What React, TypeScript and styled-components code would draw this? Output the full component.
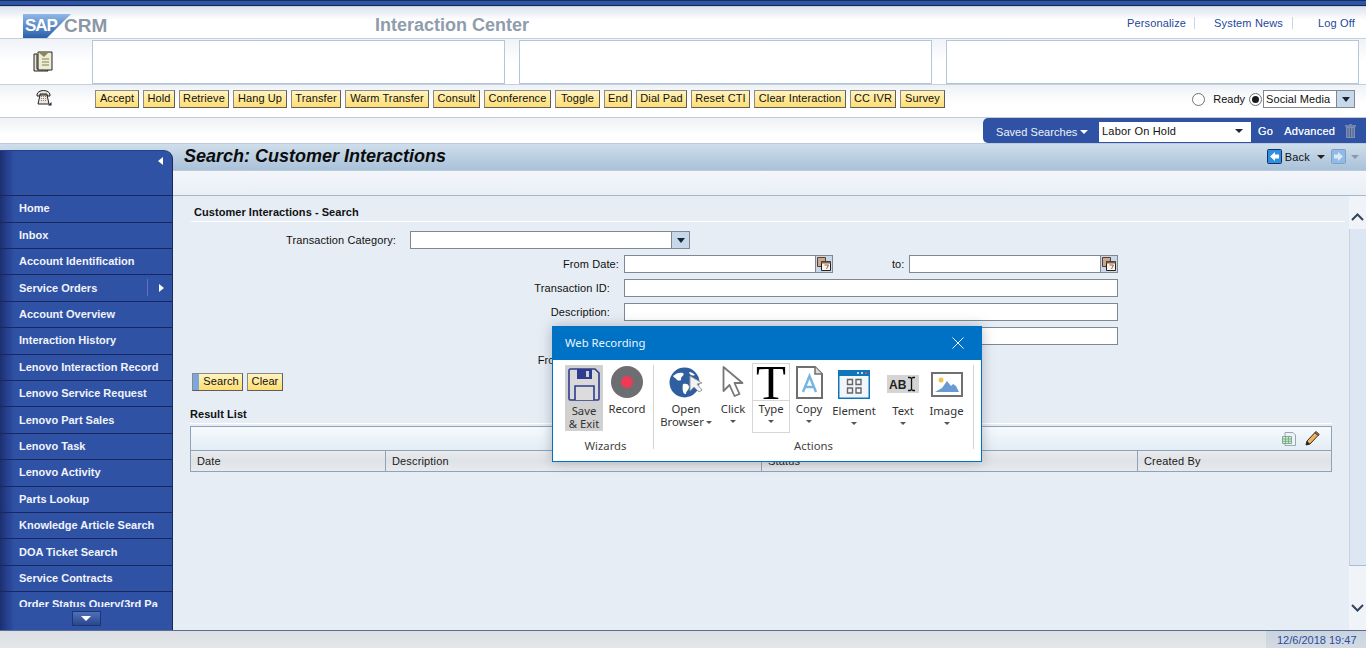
import React from "react";
import styled, { createGlobalStyle } from "styled-components";

const Global = createGlobalStyle`
  html, body { margin: 0; padding: 0; background: #fff; overflow: hidden; }
  body { font-family: "Liberation Sans", Arial, sans-serif; font-size: 11px; color: #111; }
  * { box-sizing: border-box; }
`;

const Page = styled.div`
  position: relative; width: 1366px; height: 648px; display: flex; flex-direction: column; overflow: hidden; background: #fff;
`;
const TopStripe = styled.div`
  height: 7px; flex: none;
  background: linear-gradient(#1a2c5c 0, #1a2c5c 1px, #2c55a8 1px, #2c55a8 5px, #14264e 5px, #14264e 6px, #c6d0e0 6px);
`;
const Masthead = styled.header`
  height: 32px; flex: none; display: flex; align-items: center; position: relative;
  padding-left: 23px; background: linear-gradient(#dde3ee 0, #fff 13px); border-bottom: 1px solid #c4d0dc;
`;
const LogoBox = styled.div`
  width: 84px; height: 24px; display: flex; align-items: center; position: relative; flex: none; margin-top: 7px;
  svg { position: absolute; left: 0; top: 0; }
`;
const LogoSap = styled.span`
  position: relative; font: bold 17px/24px "Liberation Sans", sans-serif; color: #fff; letter-spacing: -1px; margin-left: 2px; top: 0;
`;
const LogoCrm = styled.span`
  position: absolute; left: 41px; top: 2px; font: bold 19px/20px "Liberation Sans", sans-serif; color: #8b97a5; letter-spacing: 0;
`;
const AppTitle = styled.div`
  margin: 5px 0 0 268px; font-weight: bold; font-size: 18px; color: #8f9cab; white-space: nowrap;
`;
const HeaderLinks = styled.nav`
  margin-left: auto; display: flex; align-items: center; height: 12px; margin-top: 1px;
`;
const HeaderLink = styled.a<{ $w: number; $line?: boolean }>`
  width: ${p => p.$w}px; color: #24479c; font-size: 11px; letter-spacing: .15px; white-space: nowrap; text-align: right;
  padding-right: ${p => (p.$line ? 9 : 11)}px; height: 12px; line-height: 12px;
  border-right: ${p => (p.$line ? "1px solid #ced6df" : "0")};
`;
const NotesRow = styled.div`
  height: 46px; flex: none; display: flex; align-items: flex-start; padding: 1px 7px 0 0;
  background: linear-gradient(#eff2f7, #fff 50%); border-bottom: 1px solid #c4cfda;
`;
const NotesIcon = styled.div`
  width: 92px; display: flex; justify-content: center; padding: 11px 6px 0 0; flex: none;
`;
const NoteBoxes = styled.div`
  flex: 1; display: flex; gap: 14px;
`;
const NoteBox = styled.div`
  flex: 1; height: 44px; background: #fff; border: 1px solid #b2c7da;
`;
const CtiRow = styled.div`
  height: 33px; flex: none; display: flex; align-items: flex-start; padding-top: 5px;
  background: linear-gradient(#eef2f7, #fff 60%); border-bottom: 1px solid #c4cbd4;
`;
const PhoneIcon = styled.div`
  width: 95px; flex: none; display: flex; justify-content: center; padding: 0 8px 0 0; margin-top: -1px;
`;
const ButtonRow = styled.div`
  display: flex; gap: 4px;
`;
const CtiButton = styled.button<{ $w: number; $primary?: boolean }>`
  width: ${p => p.$w}px; height: 18px; flex: none; font: 11px/13px "Liberation Sans", sans-serif; color: #111; letter-spacing: .1px;
  border: 1px solid #6f6f6f; border-color: #8a8a8a #5e5e5e #5e5e5e #8a8a8a;
  background: ${p => p.$primary
    ? "linear-gradient(90deg,#7da6dc 0,#7da6dc 6px,transparent 6px), linear-gradient(#fff4bf,#ffdd72)"
    : "linear-gradient(#fff4bf,#ffdd72)"};
  padding: 0 0 2px ${p => (p.$primary ? "7px" : "0")};
  text-align: center;
`;
const StatusArea = styled.div`
  margin-left: auto; padding-right: 11px; display: flex; align-items: center; height: 18px;
`;
const Radio = styled.span<{ $on?: boolean }>`
  width: 13px; height: 13px; border-radius: 50%; border: 1px solid #6e7277; background: #fff; display: flex; align-items: center; justify-content: center; flex: none;
  &::after { content: ""; width: 7px; height: 7px; border-radius: 50%; background: ${p => (p.$on ? "#1a1a1a" : "transparent")}; }
`;
const RadioLabel = styled.span`
  margin: 0 4px 0 8px; font-size: 11px;
`;
const StatusSelect = styled.div`
  width: 92px; height: 18px; display: flex; border: 1px solid #7e8794; background: #fff; font-size: 11px; line-height: 16px; padding-left: 2px; letter-spacing: .1px; margin-left: 1px;
`;
const SelectText = styled.span` flex: 1; white-space: nowrap; overflow: hidden; `;
const DropButton = styled.span<{ $w?: number }>`
  width: ${p => p.$w ?? 18}px; flex: none; background: #c7d8ea; border-left: 1px solid #7e8794; display: flex; align-items: center; justify-content: center;
  &::after { content: ""; border: 4px solid transparent; border-top: 5px solid #1c2433; border-bottom: 0; }
`;
const SearchStrip = styled.div`
  height: 26px; flex: none; display: flex; justify-content: flex-end; background: linear-gradient(#eef1f5, #fff 70%); border-bottom: 1px solid #bccad9;
`;
const SavedPanel = styled.div`
  width: 383px; height: 25px; background: #3052a5; border-radius: 5px 0 0 5px; display: flex; align-items: center; color: #eef2fa; padding-left: 13px;
  font-size: 11px; white-space: nowrap;
`;
const SavedLabel = styled.span` width: 103px; flex: none; display: flex; align-items: center; gap: 3px; padding-top: 3px; letter-spacing: .05px; `;
const Caret = styled.span<{ $c?: string }>`
  border: 4px solid transparent; border-top: 4px solid ${p => p.$c ?? "#fff"}; border-bottom: 0; flex: none;
`;
const SavedInput = styled.div`
  width: 152px; height: 20px; background: #fff; color: #111; display: flex; align-items: center; justify-content: space-between; padding: 0 8px 2px 3px; flex: none; margin-top: 3px; letter-spacing: .2px;
`;
const SavedLink = styled.span<{ $ml: number }>` margin-left: ${p => p.$ml}px; margin-top: 1px; letter-spacing: .25px; text-shadow: 0 0 .6px #fff; `;
const TrashIcon = styled.span` margin-left: 10px; display: flex; margin-top: 1px; `;
const Workspace = styled.div`
  flex: 1; min-height: 0; display: flex; background: linear-gradient(#cfdeeb, #a9c1d9) 0 0 / 100% 26px no-repeat, #e6edf5;
`;
const Sidebar = styled.aside`
  width: 173px; flex: none; margin-top: 6px; border-radius: 0 9px 0 0; border-right: 1px solid #1a2a58; border-top: 1px solid #27408a; display: flex; flex-direction: column; color: #fff; overflow: hidden;
  background: linear-gradient(90deg, #1c2e6c 0, #243e8c 6px, #3052a5 15px);
`;
const SideTop = styled.div`
  height: 45.3px; flex: none; display: flex; justify-content: flex-end; padding: 6px 9px 0 0; border-bottom: 1px solid #16285f;
`;
const ArrowLeft = styled.span` width: 0; height: 0; border: 4px solid transparent; border-right: 5px solid #fff; border-left: 0; `;
const SideList = styled.div` height: 410.7px; flex: none; overflow: hidden; `;
const SideItem = styled.div`
  height: 26.4px; display: flex; align-items: center; padding: 0 0 1px 19px; font-weight: bold; font-size: 11px; color: #f1f4fb; white-space: nowrap;
  border-bottom: 1px solid #16285f; position: relative;
`;
const SideExpand = styled.span`
  position: absolute; left: 147px; top: 4px; height: 17px; width: 25px; border-left: 1px solid #5a76bd; display: flex; align-items: center; justify-content: center; padding-left: 2px;
  &::after { content: ""; border: 4px solid transparent; border-left: 5px solid #fff; border-right: 0; }
`;
const SideFoot = styled.div` flex: 1; display: flex; justify-content: center; padding: 4px 0 0 0; `;
const ScrollDown = styled.div`
  width: 29px; height: 15px; background: linear-gradient(#4f70b8, #2a468f); border: 1px solid #1f3674; display: flex; align-items: center; justify-content: center;
  &::after { content: ""; border: 5px solid transparent; border-top: 5px solid #fff; border-bottom: 0; }
`;
const Main = styled.main` flex: 1; min-width: 0; display: flex; flex-direction: column; `;
const TitleBar = styled.div`
  height: 26px; flex: none; display: flex; align-items: center; padding: 0 7px 3px 11px;
`;
const PageTitle = styled.h1`
  margin: 0; font: italic bold 18px/22px "Liberation Sans", sans-serif; color: #0c0c0c;
`;
const NavArea = styled.div` margin-left: auto; display: flex; align-items: center; padding-top: 2px; `;
const NavGap = styled.span<{ $w: number }>` width: ${p => p.$w}px; flex: none; `;
const BackLabel = styled.span` margin: 1px 7px 0 3px; font-size: 11px; letter-spacing: .2px; `;
const SubBar = styled.div`
  height: 26px; flex: none; background: linear-gradient(#f3f6fa, #e9eff5); border-top: 1px solid #bccad9; border-bottom: 1px solid #a9b8c8;
`;
const ContentRow = styled.div` flex: 1; min-height: 0; display: flex; `;
const Content = styled.div`
  flex: 1; min-width: 0; display: flex; flex-direction: column; padding: 10px 0 0 0;
`;
const SectionHead = styled.div`
  margin: 0 4px 0 18px; height: 16px; padding-left: 3px; font-weight: bold; font-size: 11px; line-height: 13px; border-bottom: 1px solid #fff; letter-spacing: .05px;
`;
const FormArea = styled.div` padding-top: 9px; display: flex; flex-direction: column; `;
const FormRow = styled.div<{ $lw: number; $gap: number }>`
  height: 24px; display: flex; align-items: flex-start; font-size: 11px;
  & > label:first-child { width: ${p => p.$lw}px; text-align: right; margin-right: ${p => p.$gap}px; flex: none; line-height: 18px; letter-spacing: .1px; white-space: nowrap; }
`;
const Field = styled.div<{ $w: number }>`
  width: ${p => p.$w}px; height: 18px; background: #fff; border: 1px solid #7e8794; display: flex; justify-content: flex-end; flex: none;
`;
const ToLabel = styled.label` margin: 0 5px 0 59px; line-height: 18px; flex: none; font-size: 11px; `;
const CalButton = styled.span`
  width: 17px; flex: none; background: #c7d8ea; border-left: 1px solid #7e8794; display: flex; align-items: center; justify-content: center;
`;
const FormButtons = styled.div` margin: -2px 0 0 19px; display: flex; gap: 4px; `;
const ResultTitle = styled.div`
  margin: 16px 0 0 17px; font-weight: bold; font-size: 11px; line-height: 14px; height: 16px; letter-spacing: .05px;
`;
const TableBox = styled.div`
  margin: 0 17px 0 17px; border-top: 1px solid #fff; padding-top: 2px;
`;
const Table = styled.div` border: 1px solid #8ea3b9; `;
const TableTools = styled.div`
  height: 24px; display: flex; justify-content: flex-end; align-items: center; gap: 9px; padding: 0 11px 0 0; background: linear-gradient(#f6fafd, #e3edf4); border-bottom: 1px solid #8ea3b9;
`;
const TableHead = styled.div`
  height: 20px; display: grid; grid-template-columns: 194px 376px 376px 1fr; background: linear-gradient(#e9ebee, #dfe2e6 50%, #e8eaed);
`;
const HeadCell = styled.div`
  padding-left: 6px; line-height: 20px; font-size: 11px; letter-spacing: .15px; border-left: 1px solid #8ea3b9; color: #1a1a1a;
  &:first-child { border-left: 0; }
`;
const Scrollbar = styled.div`
  width: 17px; flex: none; background: #f0f4f8; display: flex; flex-direction: column; align-items: center;
`;
const ScrollTop = styled.div` height: 33px; flex: none; display: flex; align-items: flex-end; padding-bottom: 8px; `;
const ScrollThumb = styled.div` width: 100%; height: 337px; flex: none; background: #dce7f3; border-bottom: 1px solid #aebccb; border-left: 1px solid #c6d3e0; `;
const ScrollBottom = styled.div` padding-top: 38px; display: flex; `;
const Footer = styled.footer`
  height: 18px; flex: none; display: flex; justify-content: flex-end; border-top: 1px solid #5b6e8f; background: linear-gradient(#dcdfe3, #e4e6e9);
`;
const DateCell = styled.div`
  width: 100px; padding: 3px 0 0 11px; background: linear-gradient(#cad4df, #d2dae3); color: #2a4c9c; font-size: 11px; white-space: nowrap;
`;

/* floating recorder */
const Recorder = styled.section`
  position: absolute; left: 552px; top: 326px; width: 430px; height: 136px; background: #fff; border: 1px solid #0072c6; box-shadow: 0 0 12px rgba(60,70,85,.35); display: flex; flex-direction: column;
  font-family: "Noto Sans", "Open Sans", sans-serif; color: #333;
`;
const RecorderTitle = styled.div`
  height: 33px; flex: none; background: #0072c6; color: #eaf4fc; display: flex; align-items: center; justify-content: space-between; padding: 0 17px 2px 12px; font-size: 11.3px;
`;
const Ribbon = styled.div` flex: 1; display: flex; padding: 5px 0 0 12px; `;
const Group = styled.div<{ $w: number; $lp: number }>`
  width: ${p => p.$w}px; flex: none; display: flex; flex-direction: column; align-items: stretch; padding-right: 0;
  & > div:last-child { padding-right: ${p => p.$lp}px; }
`;
const GroupTools = styled.div` height: 70px; display: flex; align-items: flex-start; `;
const GroupLabel = styled.div` text-align: center; font-size: 11.3px; line-height: 14px; color: #444; margin-top: 4px; `;
const Divider = styled.div<{ $mx: number }>`
  width: 1px; height: 84px; background: #d3d3d3; flex: none; margin: 0 ${p => p.$mx}px 0 0;
`;
const Tool = styled.div<{ $w: number; $ml?: number; $active?: boolean; $boxed?: boolean; $top?: number }>`
  width: ${p => p.$w}px; margin-left: ${p => p.$ml ?? 0}px; flex: none; display: flex; flex-direction: column; align-items: center;
  padding-top: ${p => p.$top ?? 1}px; font-size: 11.3px; line-height: 13px; color: #333; text-align: center; white-space: nowrap;
  height: ${p => (p.$active ? "66px" : p.$boxed ? "70px" : "auto")};
  background: ${p => (p.$active ? "#d1d1d1" : "transparent")};
  border: ${p => (p.$boxed ? "1px solid #d6d6d6" : "0")};
  margin-top: ${p => (p.$boxed ? "-2px" : "0")};
`;
const ToolIcon = styled.div<{ $h: number }>` height: ${p => p.$h}px; display: flex; justify-content: center; align-items: flex-start; flex: none; `;
const ToolCaret = styled.span<{ $mt?: number }>`
  display: block; margin-top: ${p => p.$mt ?? 5}px; border: 3px solid transparent; border-top: 3px solid #555; border-bottom: 0;
`;
const InlineCaret = styled.span`
  display: inline-block; margin-left: 2px; vertical-align: middle; border: 3px solid transparent; border-top: 3px solid #555; border-bottom: 0;
`;
const BigT = styled.span`
  display: block; width: 100%; height: 37px; border-bottom: 1px solid #d6d6d6; font: 49px/38px "Liberation Serif", serif; color: #000; text-align: center; overflow: hidden; margin-bottom: 1px;
`;

/* icons */
const NoteIcon = () => (
  <svg width="20" height="21" viewBox="0 0 20 21"><path d="M1 3h3v15h11v2H1z" fill="#e8e6cf" stroke="#222" /><path d="M5 1h14v18H5z" fill="#eeecd6" stroke="#222" /><path d="M5 1l6 5 5-5z" fill="#8a8658" /><path d="M9 8h7M9 11h7M9 14h7" stroke="#a9a77a" strokeWidth="1.4" /></svg>
);
const PhoneSvg = () => (
  <svg width="16" height="17" viewBox="0 0 16 17"><path d="M1 6C1 0 14 0 14 6v1h-3V5H4v2H1z" fill="#e9e4df" stroke="#222" /><path d="M4 6h7l2 9H2z" fill="#ece7e2" stroke="#222" /><path d="M5 7h1v1H5zm2 0h1v1H7zm2 0h1v1H9zM5 9h1v1H5zm2 0h1v1H7zm2 0h1v1H9zM5 11h1v1H5zm2 0h1v1H7zm2 0h1v1H9z" fill="#a07a70" /><path d="M12 16.500l3.500-3.500v3.500z" fill="#223" /></svg>
);
const Trash = () => (
  <svg width="11" height="14" viewBox="0 0 11 14"><path d="M0 2h11M4 0h3" stroke="#8494b8" strokeWidth="1.4" /><path d="M1 3h9v11H1z" fill="#7c8dae" /><path d="M3 4v9M5.500 4v9M8 4v9" stroke="#4b6196" /></svg>
);
const NavArrow = ({ faded, right }: { faded?: boolean; right?: boolean }) => (
  <svg width="15" height="15" viewBox="0 0 15 15"><rect x=".5" y=".5" width="14" height="14" rx="1" fill={faded ? "#8fbbe6" : "#2f8fe0"} stroke={faded ? "#7ea0c6" : "#16305f"} /><path d={right ? "M3 5.500h4V3l5 4.500-5 4.500V9.500H3z" : "M12 5.500H8V3L3 7.500 8 12V9.500h4z"} fill={faded ? "#dbe8f5" : "#fff"} /></svg>
);
const CalIcon = () => (
  <svg width="14" height="14" viewBox="0 0 14 14"><path d="M.5.500h8v9h-8z" fill="#c9a98a" stroke="#5a4030" /><path d="M4.500 4.500h9v9h-9z" fill="#fbf6ee" stroke="#2a2018" /><path d="M4.500 4.500h9v2h-9z" fill="#7d6450" /><path d="M7.500 8h4l-2 4" fill="none" stroke="#a4573a" /></svg>
);
const ExcelIcon = () => (
  <svg width="14" height="14" viewBox="0 0 14 14"><path d="M3 .500h8l2.500 2.500v10.500H3z" fill="#eef1f5" stroke="#9aa7b5" /><path d="M.5 4.500h9v7h-9z" fill="#d6ead9" stroke="#7bae8d" /><path d="M.5 7h9M.5 9.300h9M3.500 4.500v7M6.500 4.500v7" stroke="#7bae8d" /></svg>
);
const Pencil = () => (
  <svg width="15" height="15" viewBox="0 0 15 15"><path d="M1 14l1-4 8-8.500 3 3L5 13z" fill="#f3b25a" stroke="#2a2a2a" /><path d="M10 1.500l1.200-1 3 3-1.200 1z" fill="#e8716a" stroke="#2a2a2a" /><path d="M1 14l1-4 3 3z" fill="#222" /></svg>
);
const Chevron = ({ up }: { up?: boolean }) => (
  <svg width="13" height="8" viewBox="0 0 13 8"><path d={up ? "M1 7l5.500-5.500L12 7" : "M1 1l5.500 5.500L12 1"} fill="none" stroke="#33445c" strokeWidth="2" /></svg>
);
const CloseX = () => (
  <svg width="12" height="12" viewBox="0 0 12 12"><path d="M.5.500l11 11M11.500.500l-11 11" stroke="#fff" strokeWidth="1" /></svg>
);
const SaveSvg = () => (
  <svg width="32" height="33" viewBox="0 0 32 33"><path d="M1 2.500a1.500 1.500 0 0 1 1.500-1.500H27l4 4v25.500a1.500 1.500 0 0 1-1.500 1.500h-27A1.500 1.500 0 0 1 1 30.500z" fill="#d9d9d9" stroke="#2e3b8f" strokeWidth="1.6" /><path d="M9 1h15v10H9z" fill="#2e3b8f" /><path d="M18 3h3v6h-3z" fill="#d1d1d1" /><path d="M7 32V18h19v14" fill="#dcdcdc" stroke="#2e3b8f" strokeWidth="1.6" /></svg>
);
const RecordSvg = () => (
  <svg width="32" height="32" viewBox="0 0 32 32"><circle cx="16" cy="16" r="16" fill="#6d6e71" /><circle cx="16" cy="16" r="6" fill="#ef3a56" /></svg>
);
const GlobeSvg = () => (
  <svg width="34" height="32" viewBox="0 0 34 32"><circle cx="15.500" cy="15.500" r="15" fill="#2f5f9f" /><path d="M4 9c3-3 7-4 10-3 2 2-1 3-2 5 1 3-2 3-4 2-1-2-3-2-4-4zM14 17c3-1 6 0 6 3 0 3-3 4-3 7-3 1-4-5-3-10zM20 5c2 0 4 1 6 3-2 1-5 1-6-3z" fill="#fff" /><path d="M21 9l0 15 4-4 5 5 3-2-5-6 5-1z" fill="#f2f2f2" stroke="#9a9a9a" /></svg>
);
const CursorSvg = () => (
  <svg width="23" height="32" viewBox="0 0 23 32"><path d="M1.500 1v24l6-6 5 11 5-2-5-11 8 0z" fill="#fff" stroke="#777" strokeWidth="1.8" strokeLinejoin="round" /></svg>
);
const CopySvg = () => (
  <svg width="27" height="33" viewBox="0 0 27 33"><path d="M1 1h18l7 7v24H1z" fill="#fff" stroke="#6f6f6f" strokeWidth="2" /><path d="M19 1v7h7" fill="#ddd" stroke="#6f6f6f" strokeWidth="1.500" /><path d="M7 26l6.500-16L20 26M9.500 21h8" fill="none" stroke="#74b5e4" strokeWidth="2.400" /></svg>
);
const ElementSvg = () => (
  <svg width="32" height="29" viewBox="0 0 32 29"><rect width="32" height="29" fill="#0f76bb" /><rect x="1.500" y="6" width="29" height="21.500" fill="#f2f6fa" /><circle cx="20" cy="3" r="1" fill="#fff" /><circle cx="24" cy="3" r="1" fill="#fff" /><circle cx="28" cy="3" r="1" fill="#ef4c6a" /><path d="M9.500 9.500h5v5h-5zM18 9.500h5v5h-5zM9.500 18h5v5h-5zM18 18h5v5h-5z" fill="none" stroke="#666" strokeWidth="1.400" /></svg>
);
const TextSvg = () => (
  <svg width="32" height="19" viewBox="0 0 32 19"><rect width="32" height="18" fill="#d4d4d4" /><text x="2" y="14" fontFamily="Liberation Sans" fontWeight="bold" fontSize="12" fill="#222">AB</text><path d="M21 2.500h2l1.500 1 1.500-1h2M24.500 3.500v11M21 15.500h2l1.500-1 1.500 1h2" fill="none" stroke="#111" strokeWidth="1.300" /></svg>
);
const ImageSvg = () => (
  <svg width="32" height="25" viewBox="0 0 32 25"><rect x="1" y="1" width="30" height="23" fill="#fff" stroke="#707070" strokeWidth="2" /><circle cx="10" cy="8" r="2.500" fill="#f3c14e" /><path d="M4 20l7-4 5-7 4 5 2-2 3 2 3 6z" fill="#6a9ad4" /></svg>
);

const ctiButtons: [string, number][] = [
  ["Accept", 44], ["Hold", 32], ["Retrieve", 50], ["Hang Up", 54], ["Transfer", 50], ["Warm Transfer", 84], ["Consult", 47], ["Conference", 67],
  ["Toggle", 45], ["End", 28], ["Dial Pad", 51], ["Reset CTI", 59], ["Clear Interaction", 92], ["CC IVR", 46], ["Survey", 45],
];
const navItems = [
  "Home", "Inbox", "Account Identification", "Service Orders", "Account Overview", "Interaction History", "Lenovo Interaction Record", "Lenovo Service Request",
  "Lenovo Part Sales", "Lenovo Task", "Lenovo Activity", "Parts Lookup", "Knowledge Article Search", "DOA Ticket Search", "Service Contracts", "Order Status Query(3rd Pa",
];

export default function App() {
  return (
    <Page>
      <Global />
      <TopStripe />
      <Masthead>
        <LogoBox>
          <svg width="48" height="24" viewBox="0 0 48 24"><defs><linearGradient id="sapg" x1="0" y1="0" x2="0" y2="1"><stop offset="0" stopColor="#8fb8e6" /><stop offset="1" stopColor="#2a5fa8" /></linearGradient></defs><path d="M0 0h48L24 24H0z" fill="url(#sapg)" /></svg>
          <LogoSap>SAP</LogoSap>
          <LogoCrm>CRM</LogoCrm>
        </LogoBox>
        <AppTitle>Interaction Center</AppTitle>
        <HeaderLinks>
          <HeaderLink $w={68} $line>Personalize</HeaderLink>
          <HeaderLink $w={98} $line>System News</HeaderLink>
          <HeaderLink $w={73}>Log Off</HeaderLink>
        </HeaderLinks>
      </Masthead>
      <NotesRow>
        <NotesIcon><NoteIcon /></NotesIcon>
        <NoteBoxes><NoteBox /><NoteBox /><NoteBox /></NoteBoxes>
      </NotesRow>
      <CtiRow>
        <PhoneIcon><PhoneSvg /></PhoneIcon>
        <ButtonRow>
          {ctiButtons.map(([t, w]) => <CtiButton key={t} $w={w}>{t}</CtiButton>)}
        </ButtonRow>
        <StatusArea>
          <Radio />
          <RadioLabel>Ready</RadioLabel>
          <Radio $on />
          <StatusSelect><SelectText>Social Media</SelectText><DropButton /></StatusSelect>
        </StatusArea>
      </CtiRow>
      <SearchStrip>
        <SavedPanel>
          <SavedLabel>Saved Searches<Caret /></SavedLabel>
          <SavedInput>Labor On Hold<Caret $c="#1c2433" /></SavedInput>
          <SavedLink $ml={7}>Go</SavedLink>
          <SavedLink $ml={11}>Advanced</SavedLink>
          <TrashIcon><Trash /></TrashIcon>
        </SavedPanel>
      </SearchStrip>
      <Workspace>
        <Sidebar>
          <SideTop><ArrowLeft /></SideTop>
          <SideList>
            {navItems.map(n => (
              <SideItem key={n}>{n}{n === "Service Orders" && <SideExpand />}</SideItem>
            ))}
          </SideList>
          <SideFoot><ScrollDown /></SideFoot>
        </Sidebar>
        <Main>
          <TitleBar>
            <PageTitle>Search: Customer Interactions</PageTitle>
            <NavArea>
              <NavArrow />
              <BackLabel>Back</BackLabel>
              <Caret $c="#222" />
              <NavGap $w={6} />
              <NavArrow faded right />
              <NavGap $w={5} />
              <Caret $c="#8d98a6" />
            </NavArea>
          </TitleBar>
          <SubBar />
          <ContentRow>
            <Content>
              <SectionHead>Customer Interactions - Search</SectionHead>
              <FormArea>
                <FormRow $lw={223} $gap={14}>
                  <label>Transaction Category:</label>
                  <Field $w={280}><DropButton $w={18} /></Field>
                </FormRow>
                <FormRow $lw={446} $gap={5}>
                  <label>From Date:</label>
                  <Field $w={209}><CalButton><CalIcon /></CalButton></Field>
                  <ToLabel>to:</ToLabel>
                  <Field $w={209}><CalButton><CalIcon /></CalButton></Field>
                </FormRow>
                <FormRow $lw={437} $gap={14}>
                  <label>Transaction ID:</label>
                  <Field $w={494} />
                </FormRow>
                <FormRow $lw={437} $gap={14}>
                  <label>Description:</label>
                  <Field $w={494} />
                </FormRow>
                <FormRow $lw={437} $gap={14}>
                  <label />
                  <Field $w={494} />
                </FormRow>
                <FormRow $lw={437} $gap={14}>
                  <label>From Account:</label>
                </FormRow>
              </FormArea>
              <FormButtons>
                <CtiButton $w={51} $primary>Search</CtiButton>
                <CtiButton $w={36}>Clear</CtiButton>
              </FormButtons>
              <ResultTitle>Result List</ResultTitle>
              <TableBox>
                <Table>
                  <TableTools><ExcelIcon /><Pencil /></TableTools>
                  <TableHead>
                    <HeadCell>Date</HeadCell>
                    <HeadCell>Description</HeadCell>
                    <HeadCell>Status</HeadCell>
                    <HeadCell>Created By</HeadCell>
                  </TableHead>
                </Table>
              </TableBox>
            </Content>
            <Scrollbar>
              <ScrollTop><Chevron up /></ScrollTop>
              <ScrollThumb />
              <ScrollBottom><Chevron /></ScrollBottom>
            </Scrollbar>
          </ContentRow>
        </Main>
      </Workspace>
      <Footer><DateCell>12/6/2018 19:47</DateCell></Footer>
      <Recorder>
        <RecorderTitle>Web Recording<CloseX /></RecorderTitle>
        <Ribbon>
          <Group $w={88} $lp={7}>
            <GroupTools>
              <Tool $w={38} $active $top={3}><ToolIcon $h={36}><SaveSvg /></ToolIcon>Save<br />&amp; Exit</Tool>
              <Tool $w={40} $ml={4} $top={1}><ToolIcon $h={36}><RecordSvg /></ToolIcon>Record</Tool>
            </GroupTools>
            <GroupLabel>Wizards</GroupLabel>
          </Group>
          <Divider $mx={2} />
          <Group $w={317} $lp={2}>
            <GroupTools>
              <Tool $w={60} $top={2}><ToolIcon $h={35}><GlobeSvg /></ToolIcon>Open<span>Browser<InlineCaret /></span></Tool>
              <Tool $w={34} $top={1}><ToolIcon $h={36}><CursorSvg /></ToolIcon>Click<ToolCaret /></Tool>
              <Tool $w={38} $ml={2} $boxed $top={0}><BigT>T</BigT>Type<ToolCaret /></Tool>
              <Tool $w={38} $top={1}><ToolIcon $h={36}><CopySvg /></ToolIcon>Copy<ToolCaret /></Tool>
              <Tool $w={46} $ml={3} $top={5}><ToolIcon $h={34}><ElementSvg /></ToolIcon>Element<ToolCaret /></Tool>
              <Tool $w={46} $ml={3} $top={10}><ToolIcon $h={29}><TextSvg /></ToolIcon>Text<ToolCaret /></Tool>
              <Tool $w={41} $top={7}><ToolIcon $h={32}><ImageSvg /></ToolIcon>Image<ToolCaret /></Tool>
            </GroupTools>
            <GroupLabel>Actions</GroupLabel>
          </Group>
          <Divider $mx={0} />
        </Ribbon>
      </Recorder>
    </Page>
  );
}
